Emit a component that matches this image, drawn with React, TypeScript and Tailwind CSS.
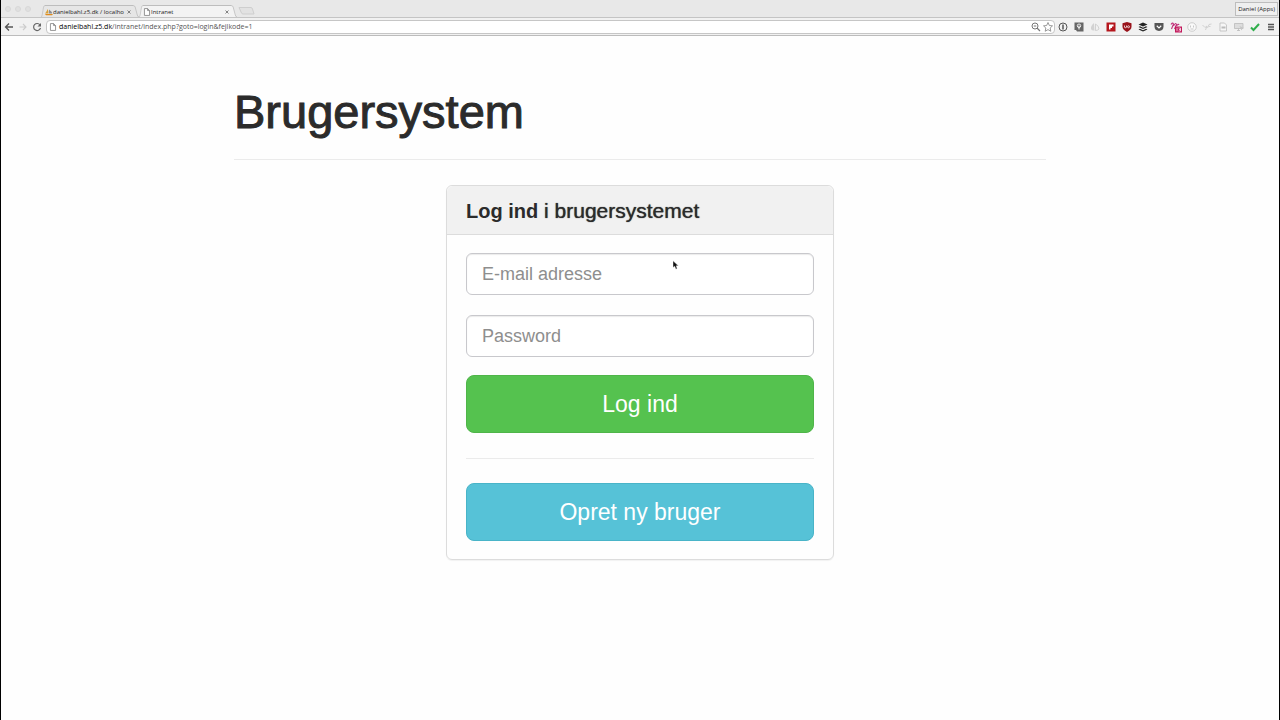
import React from "react";

type TabProps = { title: string; active?: boolean; width: string; icon: React.ReactNode };

function PageIcon() {
  return (
    <svg viewBox="0 0 12 14" className="h-2 w-2 shrink-0" fill="#fff" stroke="#7d7d7d" strokeWidth="1.4">
      <path d="M1.5 1h5.5l3.5 3.5V13h-9zM7 1v3.5h3.5" />
    </svg>
  );
}

function AdminIcon() {
  return (
    <svg viewBox="0 0 16 14" className="h-2 w-2 shrink-0">
      <path d="M5 1q3 5 2 9H0q4-4 5-9z" fill="#d9a13b" />
      <path d="M8 2q6 4 6 8H8z" fill="#8a8f96" />
      <path d="M0 11h16l-2 2.5H2z" fill="#e08b1d" />
    </svg>
  );
}

function Tab({ title, active, width, icon }: TabProps) {
  const fill = active ? "#f3f3f3" : "#e6e6e6";
  return (
    <div className={"flex h-3 items-stretch " + width}>
      <svg viewBox="0 0 7 12" className="h-3 w-1 shrink-0" preserveAspectRatio="none">
        <path d="M0 12Q1.5 12 2 10L4.500 2Q5 .5 7 .5V12z" fill={fill} />
        <path d="M0 12Q1.5 12 2 10L4.500 2Q5 .5 7 .5" fill="none" stroke="#b9b9b9" strokeWidth=".8" />
      </svg>
      <div
        className={
          "flex grow items-center border-t border-[#bdbdbd] " + (active ? "bg-[#f3f3f3]" : "bg-[#e6e6e6]")
        }
      >
        {icon}
        <span className="grow font-['Open_Sans','Noto_Sans',sans-serif] text-[6px] leading-[10px] whitespace-nowrap text-[#222]">
          {title}
        </span>
        <button type="button" aria-label="Luk fane" className="shrink-0 px-0.5">
          <svg viewBox="0 0 8 8" className="size-1" stroke="#666" strokeWidth="1.6">
            <path d="M1 1l6 6M7 1L1 7" />
          </svg>
        </button>
      </div>
      <svg viewBox="0 0 7 12" className="h-3 w-1.5 shrink-0" preserveAspectRatio="none">
        <path d="M7 12Q5.500 12 5 10L2.500 2Q2 .5 0 .5V12z" fill={fill} />
        <path d="M7 12Q5.500 12 5 10L2.500 2Q2 .5 0 .5" fill="none" stroke="#b9b9b9" strokeWidth=".8" />
      </svg>
    </div>
  );
}

function IconButton({ label, children, className = "w-4" }: { label: string; children: React.ReactNode; className?: string }) {
  return (
    <button type="button" aria-label={label} className={"flex h-4 shrink-0 items-center justify-center " + className}>
      <svg viewBox="0 0 20 20" className="size-2.5 overflow-visible" fill="none">
        {children}
      </svg>
    </button>
  );
}

function Browser() {
  return (
    <header className="bg-[#e8e8e8]">
      <div className="flex h-[18px] items-end border-b border-[#c4c4c4]">
        <div className="flex w-10 shrink-0 gap-1 self-center pl-1">
          <span className="size-1.5 rounded-full border border-[#d8d8d8] bg-[#e0e0e0]" />
          <span className="size-1.5 rounded-full border border-[#d8d8d8] bg-[#e0e0e0]" />
          <span className="size-1.5 rounded-full border border-[#d8d8d8] bg-[#e0e0e0]" />
        </div>
        <Tab title="danielbahl.z5.dk / localho" width="w-[98px]" icon={<AdminIcon />} />
        <Tab title="Intranet" active width="w-[98px]" icon={<PageIcon />} />
        <svg viewBox="0 0 18 10" className="mb-px ml-px h-2.5 w-[18px]" fill="#e2e2e2" stroke="#cecece">
          <path d="M1 1.500h12q1 0 1.500 1.500l1.500 5H5q-1 0-1.500-1z" />
        </svg>
        <button
          type="button"
          className="mr-px mb-px ml-auto h-3.5 border border-[#bdbdbd] bg-[#efefef] px-0.5 font-['Open_Sans','Noto_Sans',sans-serif] text-[6px] leading-3 text-[#222]"
        >
          Daniel (Apps)
        </button>
      </div>
      <div className="flex h-[18px] items-center border-b border-[#bcbcbc] bg-[#f1f1f1]">
        <IconButton label="Tilbage">
          <path d="M18 10H3M10 3l-7 7 7 7" stroke="#555" strokeWidth="2.600" />
        </IconButton>
        <IconButton label="Frem" className="w-3">
          <path d="M3 10h13M10 4l6 6-6 6" stroke="#ccc" strokeWidth="2.200" />
        </IconButton>
        <IconButton label="Genindlæs">
          <path d="M16 6a7 7 0 1 0 1 6" stroke="#666" strokeWidth="2.400" />
          <path d="M18 2v7h-7z" fill="#666" />
        </IconButton>
        <div className="ml-px flex h-3.5 grow items-center rounded-sm border border-[#c6c6c6] bg-white pl-0.5">
          <PageIcon />
          <div className="relative ml-0.5 grow font-['Open_Sans','Noto_Sans',sans-serif] text-[7px] leading-3 text-[#555]">
            <span aria-hidden="true" className="block">
              <span className="text-black">danielbahl.z5.dk</span>/intranet/index.php?goto=login&amp;fejlkode=1
            </span>
            <input aria-label="Adresse" type="text" className="absolute inset-0 w-full bg-transparent opacity-0" />
          </div>
          <IconButton label="Zoom" className="w-3">
            <circle cx="8" cy="8" r="6" stroke="#777" strokeWidth="2" />
            <path d="M12 12l6 6M5.500 8h5" stroke="#777" strokeWidth="2.400" />
          </IconButton>
          <IconButton label="Bogmærk" className="w-3">
            <path d="M10 1l2.700 6 6.300.700-4.700 4.300 1.300 6.500-5.600-3.300-5.600 3.300 1.300-6.500L1 7.700 7.300 7z" stroke="#888" strokeWidth="1.700" />
          </IconButton>
        </div>
        <IconButton label="Adgangskoder">
          <circle cx="10" cy="10" r="8" stroke="#555" strokeWidth="2" />
          <path d="M10 5v10" stroke="#555" strokeWidth="3" />
        </IconButton>
        <IconButton label="Noter">
          <path d="M1 1h18v18H6l-2-3H1z" fill="#666" />
          <circle cx="10" cy="7.500" r="3.500" stroke="#fff" strokeWidth="1.700" />
          <path d="M10 7v8" stroke="#fff" strokeWidth="2" />
        </IconButton>
        <IconButton label="Drev">
          <path d="M8 2Q1 8 2 14q2 4 7 3z" fill="#d2d2d2" />
          <path d="M11 4q7 4 7 10-3 3-7 3z" stroke="#c6c6c6" strokeWidth="1.500" />
        </IconButton>
        <IconButton label="Flipboard">
          <path d="M1 1h18v18H1z" fill="#b5161d" />
          <path d="M6 5h9v4h-3v3H9v3H6z" fill="#fff" />
        </IconButton>
        <IconButton label="Blokering">
          <path d="M10 0l9 2.500v7q0 6-9 10.500Q1 15.500 1 9.500v-7z" fill="#98121a" />
          <path d="M5 7v3q0 1.500 2 1.500T9 10V7" stroke="#fff" strokeWidth="1.500" />
          <circle cx="13" cy="9.500" r="2" stroke="#fff" strokeWidth="1.500" />
        </IconButton>
        <IconButton label="Buffer">
          <path d="M10 1l9 4-9 4-9-4z" fill="#222" />
          <path d="M1 10l3-1.400 6 2.800 6-2.800 3 1.400-9 4z" fill="#222" />
          <path d="M1 15l3-1.400 6 2.800 6-2.800 3 1.400-9 4z" fill="#222" />
        </IconButton>
        <IconButton label="Pocket">
          <path d="M1 2h18v7q0 8-9 9-9-1-9-9z" fill="#555" />
          <path d="M5.500 7.500l4.500 4.300 4.500-4.300" stroke="#fff" strokeWidth="2.200" />
        </IconButton>
        <IconButton label="Beskeder" className="w-[17px]">
          <path d="M0 5q3-5 5-1L1 14M5 8q4-8 6-3L7 14M11 8q4-6 5-2" stroke="#c2347c" strokeWidth="2.200" />
          <path d="M8 9h14v12H8z" fill="#c2185b" />
          <path d="M12 11.500v7M15 12h4v6h-4M16 15h3" stroke="#fff" strokeWidth="1.400" />
        </IconButton>
        <IconButton label="Profil" className="w-[15px]">
          <circle cx="10" cy="10" r="8.500" fill="#fafafa" stroke="#bdbdbd" strokeWidth="1.500" />
          <path d="M7 7v4M13 7v4M7 14h6" stroke="#bbb" strokeWidth="1.600" />
        </IconButton>
        <IconButton label="Forbindelse">
          <path d="M1 6l5 5 4-3-3 8M11 12l3-7 5-1M13 9h4" stroke="#d2d2d2" strokeWidth="2" />
        </IconButton>
        <IconButton label="Dokument">
          <path d="M4 2h9l4 4v12H4z" fill="#f6f6f6" stroke="#bbb" strokeWidth="1.600" />
          <path d="M7 9h8v4H7z" fill="#bbb" />
        </IconButton>
        <IconButton label="Skærm">
          <path d="M1 3h17v10H1zM6 17h6M9 13v4" fill="#ddd" stroke="#bbb" strokeWidth="1.600" />
          <path d="M11 8l4 9 2-4 3-1z" fill="#c6c6c6" />
        </IconButton>
        <IconButton label="Godkendt">
          <path d="M2 11l5 5L18 4" stroke="#2fae4b" strokeWidth="4" />
        </IconButton>
        <IconButton label="Menu">
          <path d="M4 5h12M4 10h12M4 15h12" stroke="#555" strokeWidth="2.600" />
        </IconButton>
      </div>
    </header>
  );
}

const field =
  "block h-[42px] w-full rounded-md border border-[#c8c8cc] bg-white px-[15px] text-lg text-[#555] shadow-[inset_0_1px_1px_rgba(0,0,0,0.08)] outline-none placeholder:text-[#8e8e8e] placeholder:opacity-100";
const button = "block h-[58px] w-full rounded-lg border text-[23px] leading-8 text-white";

function Cursor() {
  return (
    <svg viewBox="0 0 8 12" className="pointer-events-none absolute top-[7px] left-[206px] h-2.5 w-[7px]">
      <path d="M1 1v8l2-1.500L4.500 11 6 10.300 4.800 7H7.500z" fill="#111" stroke="#fff" strokeWidth=".5" />
    </svg>
  );
}

export default function App() {
  return (
    <div className="flex min-h-screen flex-col border-x border-black bg-[#fefefe] font-['Liberation_Sans',Arial,sans-serif] text-[#2b2b2b]">
      <Browser />
      <main className="mx-auto w-full max-w-[812px] pt-12">
        <h1 className="border-b border-[#ebebeb] pb-5 text-[47px] leading-[55px] font-normal [-webkit-text-stroke:1px_#2b2b2b]">
          Brugersystem
        </h1>
        <section className="mx-auto mt-[25px] w-full max-w-[388px] rounded-md border border-[#dcdcdc] shadow-[0_1px_1px_rgba(0,0,0,0.05)]">
          <h2 className="rounded-t-md border-b border-[#dcdcdc] bg-[#f1f1f1] px-[19px] pt-[13px] pb-[11px] text-[21px] leading-6 font-normal text-shadow-[0_0_1px_#2b2b2b]">
            <strong className="text-[20px] font-bold text-shadow-none">Log ind</strong> i brugersystemet
          </h2>
          <form className="px-[19px] py-[18px]" onSubmit={(e) => e.preventDefault()}>
            <div className="relative">
              <input type="email" aria-label="E-mail adresse" placeholder="E-mail adresse" className={field} />
              <Cursor />
            </div>
            <input type="password" aria-label="Password" placeholder="Password" className={field + " mt-5"} />
            <button type="submit" className={button + " mt-[18px] border-[#4fb549] bg-[#55c24f]"}>
              Log ind
            </button>
            <hr className="mt-[25px] mb-6 border-[#ebebeb]" />
            <button type="button" className={button + " border-[#49b4c8] bg-[#56c2d7]"}>
              Opret ny bruger
            </button>
          </form>
        </section>
      </main>
    </div>
  );
}
